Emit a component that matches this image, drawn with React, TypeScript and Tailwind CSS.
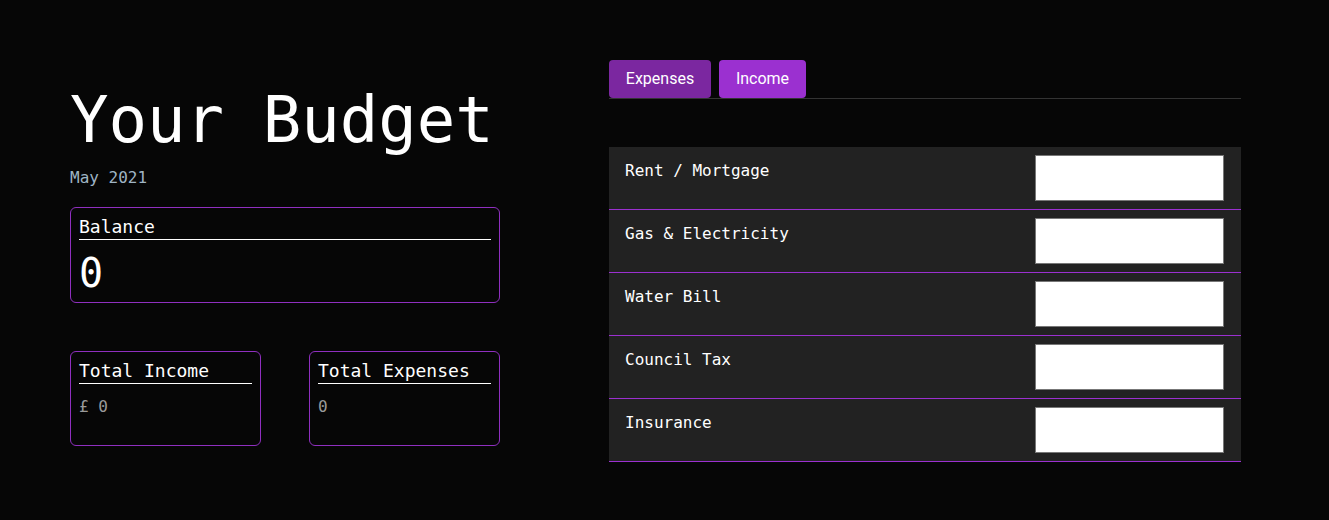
import React from 'react';

const mono = { fontFamily: '"DejaVu Sans Mono", "Liberation Mono", monospace' };

const rows = ['Rent / Mortgage', 'Gas & Electricity', 'Water Bill', 'Council Tax', 'Insurance'];

const SmallCard: React.FC<{ title: string; value: string }> = ({ title, value }) => (
  <div className="w-[191px] h-[95px] border border-[#8f2fbf] rounded-md px-2 pt-[8px]">
    <div className="text-[18px] leading-[22px] text-white border-b border-white pb-[1px]">{title}</div>
    <div className="mt-[11px] text-[16px] leading-6 text-[#9a9a9a]">{value}</div>
  </div>
);

export default function App() {
  return (
    <div className="min-h-[520px] w-full bg-[#060606] text-white" style={mono}>
      <div className="flex pl-[70px] pt-[60px]">
        {/* left: summary */}
        <div className="w-[430px] flex flex-col">
          <h1 className="mt-[28px] text-[64px] leading-[64px] font-normal">Your Budget</h1>
          <div className="mt-[14px] text-[16px] leading-6 text-[#9fb4c4]">May 2021</div>
          <div className="mt-[17px] h-[96px] border border-[#8f2fbf] rounded-md px-2 pt-[8px]">
            <div className="text-[18px] leading-[22px] border-b border-white pb-[1px]">Balance</div>
            <div className="mt-[8px] text-[40px] leading-[50px]">0</div>
          </div>
          <div className="mt-[48px] flex justify-between">
            <SmallCard title="Total Income" value="£ 0" />
            <SmallCard title="Total Expenses" value="0" />
          </div>
        </div>

        {/* right: entries */}
        <div className="ml-[109px] w-[632px] flex flex-col">
          <div className="flex gap-2 border-b border-[#333333]" style={{ fontFamily: 'Roboto, "Liberation Sans", sans-serif' }}>
            <button className="h-[38px] w-[102px] rounded bg-[#7b27a0] text-white text-[16px]">Expenses</button>
            <button className="h-[38px] w-[87px] rounded bg-[#9b30d0] text-white text-[16px]">Income</button>
          </div>
          <div className="mt-[48px] bg-[#222222]">
            {rows.map((r) => (
              <div key={r} className="flex justify-between items-start h-[63px] border-b border-[#9b30d0] pl-4 pr-[17px] pt-2">
                <span className="mt-[4px] text-[16px] leading-6 text-white">{r}</span>
                <input className="w-[189px] h-[46px] bg-white border border-[#777777] outline-none" />
              </div>
            ))}
          </div>
        </div>
      </div>
    </div>
  );
}
